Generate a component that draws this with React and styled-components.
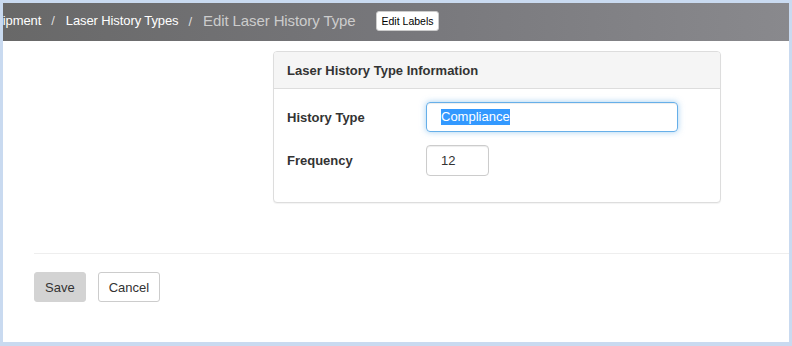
import React, { Fragment } from 'react';
import styled, { createGlobalStyle } from 'styled-components';

const GlobalStyle = createGlobalStyle`
  html, body {
    margin: 0;
    padding: 0;
    background: #c9daf0;
  }

  body {
    font-family: "Liberation Sans", Arial, sans-serif;
    color: #333;
  }
`;

const Frame = styled.div`
  box-sizing: border-box;
  width: 792px;
  height: 346px;
  padding: 3px 3px 4px 3px;
  background: #c9daf0;
`;

const Page = styled.div`
  height: 100%;
  background: #fff;
  overflow: hidden;
  display: flex;
  flex-direction: column;
`;

const TopBar = styled.header`
  box-sizing: border-box;
  height: 38px;
  padding-bottom: 3px;
  flex-shrink: 0;
  display: flex;
  align-items: center;
  overflow: hidden;
  background: linear-gradient(to right, #686868 0%, #77777b 50%, #89898d 100%);
`;

const Crumbs = styled.ol`
  display: flex;
  align-items: center;
  list-style: none;
  margin: 0 0 0 -23px;
  padding: 0;
  white-space: nowrap;
`;

const Crumb = styled.li`
  font-size: 13px;
  color: #fff;
  letter-spacing: -0.1px;

  & + &:before {
    content: '/';
    color: #ddd;
    padding: 0 11px 0 10px;
  }
`;

const CurrentCrumb = styled(Crumb)`
  font-size: 15px;
  color: #ccc;

  &:before {
    font-size: 13px;
  }
`;

const LabelsButton = styled.button`
  margin-left: 20px;
  height: 20px;
  padding: 0 5px;
  border: 1px solid #ccc;
  border-radius: 3px;
  background: #fff;
  color: #000;
  font-family: inherit;
  font-size: 10.5px;
`;

const Content = styled.div`
  padding: 10px 0 0 270px;
`;

const Panel = styled.section`
  width: 448px;
  box-sizing: border-box;
  border: 1px solid #ddd;
  border-radius: 4px;
  background: #fff;
  box-shadow: 0 1px 1px rgba(0, 0, 0, 0.05);
`;

const PanelHeading = styled.h3`
  margin: 0;
  height: 36px;
  padding: 0 13px;
  display: flex;
  align-items: center;
  background: #f5f5f5;
  border-bottom: 1px solid #ddd;
  border-radius: 3px 3px 0 0;
  font-size: 13px;
  font-weight: bold;
  color: #333;
`;

const PanelBody = styled.div`
  padding: 13px 13px 26px;
  display: flex;
  flex-direction: column;
  gap: 13px;
`;

const FieldRow = styled.div`
  display: flex;
  align-items: center;
`;

const FieldLabel = styled.label`
  width: 139px;
  flex-shrink: 0;
  font-size: 13px;
  font-weight: bold;
  color: #333;
`;

const FieldBox = styled.div`
  box-sizing: border-box;
  width: ${p => p.$width}px;
  height: ${p => p.$height}px;
  padding: 0 14px;
  display: flex;
  align-items: center;
  border: 1px solid ${p => (p.$focused ? '#66afe9' : '#ccc')};
  border-radius: 4px;
  font-size: 13px;
  color: #333;
  box-shadow: ${p =>
    p.$focused
      ? 'inset 0 1px 1px rgba(0,0,0,.075), 0 0 6px rgba(102,175,233,.6)'
      : 'inset 0 1px 1px rgba(0,0,0,.075)'};
`;

const Selected = styled.span`
  background: #3399ff;
  color: #fff;
  line-height: 16px;
`;

const Footer = styled.div`
  margin-top: 50px;
  margin-left: 31px;
  padding-top: 18px;
  border-top: 1px solid #eee;
  display: flex;
  gap: 12px;
`;

const Button = styled.button`
  box-sizing: border-box;
  height: 30px;
  padding: 0 10px;
  border: 1px solid ${p => (p.$primary ? '#d3d3d3' : '#ccc')};
  border-radius: 3px;
  background: ${p => (p.$primary ? '#d3d3d3' : '#fff')};
  color: #333;
  font-family: inherit;
  font-size: 13px;
`;

const App = () => (
  <Fragment>
    <GlobalStyle />
    <Frame>
      <Page>
        <TopBar>
          <Crumbs>
            <Crumb>Equipment</Crumb>
            <Crumb>Laser History Types</Crumb>
            <CurrentCrumb>Edit Laser History Type</CurrentCrumb>
          </Crumbs>
          <LabelsButton>Edit Labels</LabelsButton>
        </TopBar>
        <Content>
          <Panel>
            <PanelHeading>Laser History Type Information</PanelHeading>
            <PanelBody>
              <FieldRow>
                <FieldLabel>History Type</FieldLabel>
                <FieldBox $width={252} $height={30} $focused>
                  <Selected>Compliance</Selected>
                </FieldBox>
              </FieldRow>
              <FieldRow>
                <FieldLabel>Frequency</FieldLabel>
                <FieldBox $width={63} $height={31}>12</FieldBox>
              </FieldRow>
            </PanelBody>
          </Panel>
        </Content>
        <Footer>
          <Button $primary>Save</Button>
          <Button>Cancel</Button>
        </Footer>
      </Page>
    </Frame>
  </Fragment>
);

export default App;
